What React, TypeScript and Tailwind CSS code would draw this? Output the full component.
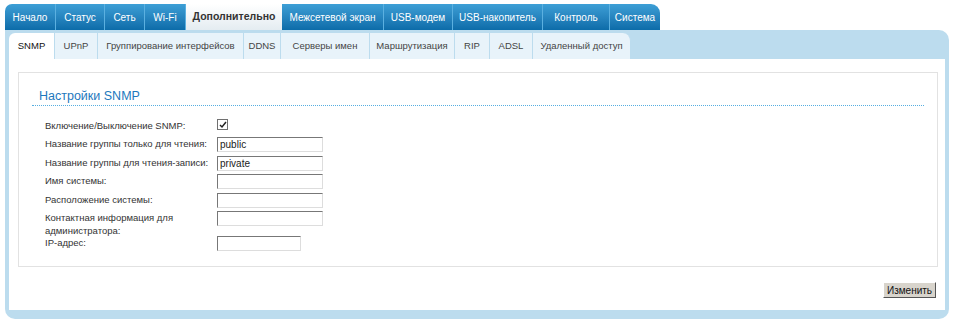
import React from "react";

const top = [
  { t: "Начало", w: 51 },
  { t: "Статус", w: 49 },
  { t: "Сеть", w: 40 },
  { t: "Wi-Fi", w: 41 },
  { t: "Дополнительно", w: 96, sel: true },
  { t: "Межсетевой экран", w: 102 },
  { t: "USB-модем", w: 69 },
  { t: "USB-накопитель", w: 90 },
  { t: "Контроль", w: 67 },
  { t: "Система", w: 50 },
];

const sub = [
  { t: "SNMP", w: 46, sel: true },
  { t: "UPnP", w: 43 },
  { t: "Группирование интерфейсов", w: 146 },
  { t: "DDNS", w: 37 },
  { t: "Серверы имен", w: 89 },
  { t: "Маршрутизация", w: 85 },
  { t: "RIP", w: 35 },
  { t: "ADSL", w: 43 },
  { t: "Удаленный доступ", w: 98 },
];

const rows: { label: React.ReactNode; kind: "cb" | "in" | "ip"; value?: string; h: string }[] = [
  { label: "Включение/Выключение SNMP:", kind: "cb", h: "h-[18px]" },
  { label: "Название группы только для чтения:", kind: "in", value: "public", h: "h-[19px]" },
  { label: "Название группы для чтения-записи:", kind: "in", value: "private", h: "h-[18px]" },
  { label: "Имя системы:", kind: "in", h: "h-[19px]" },
  { label: "Расположение системы:", kind: "in", h: "h-[18px]" },
  { label: <>Контактная информация для<br />администратора:</>, kind: "in", h: "h-[25px]" },
  { label: "IP-адрес:", kind: "ip", h: "h-[18px]" },
];

export default function App() {
  return (
    <div className="w-[954px] h-[325px] bg-white pt-[4px] pl-[5px] pr-[5px] text-[10px] text-[#222]" style={{ fontFamily: '"Liberation Sans", Arial, sans-serif' }}>
      {/* top tabs */}
      <div className="flex h-[26px]">
        {top.map((x, i) => (
          <div
            key={x.t}
            style={{ width: x.w }}
            className={
              "flex items-center justify-center shrink-0 whitespace-nowrap " +
              (x.sel
                ? "bg-gradient-to-b from-[#ffffff] to-[#e4ecf1] text-[#333] font-bold text-[10.5px]"
                : "bg-gradient-to-b from-[#3d9fd6] to-[#0c6ca9] text-white border-r border-[#5bb0e0] text-[10px]") +
              (i === 0 ? " rounded-tl-[7px]" : "") +
              (i === top.length - 1 ? " rounded-tr-[9px] border-r-0" : "")
            }
          >
            {x.t}
          </div>
        ))}
      </div>
      {/* panel */}
      <div className="bg-[#bcdcee] rounded-tr-[10px] rounded-b-[10px] px-[4px] pb-[9px] pt-[3px]">
        <div className="flex h-[26px] bg-[#bcdcee]">
          {sub.map((x, i) => (
            <div
              key={x.t}
              style={{ width: x.w }}
              className={
                "flex items-center justify-center shrink-0 whitespace-nowrap text-[9.5px] border-r border-[#bcdcee] " +
                (x.sel ? "bg-white text-[#111]" : "bg-[#e8f3fa] text-[#444]") +
                (i === 0 ? " rounded-tl-[6px]" : "") +
                (i === sub.length - 1 ? " rounded-tr-[8px]" : "")
              }
            >
              {x.t}
            </div>
          ))}
        </div>
        <div className="bg-white pt-[13px] pl-[9px] pr-[7px] pb-[12px]">
          <div className="border border-[#e2e2e2] h-[195px] pt-[16px] pl-[13px] pr-[13px]">
            <div className="text-[12.5px] text-[#1d78bd] pl-[7px] leading-[15px]">Настройки SNMP</div>
            <div className="border-b border-dotted border-[#56aee0] mt-[1px] mb-[12px]" />
            <div className="pl-[13px]">
              {rows.map((r, i) => (
                <div key={i} className={"flex " + r.h}>
                  <div className="w-[172px] shrink-0 leading-[13px] text-[9.5px] text-[#333] whitespace-nowrap pt-[1px]">{r.label}</div>
                  {r.kind === "cb" ? (
                    <div className="w-[11px] h-[11px] border border-[#707070] bg-white flex items-center justify-center mt-[1px]">
                      <svg width="8" height="8" viewBox="0 0 8 8">
                        <path d="M1 4 L3 6 L7 1" stroke="#222" strokeWidth="1.5" fill="none" />
                      </svg>
                    </div>
                  ) : (
                    <div
                      className={
                        "h-[15px] border border-t-[#777] border-l-[#777] border-r-[#ddd] border-b-[#ddd] bg-white text-[10px] leading-[13px] pl-[2px] mt-[1px] " +
                        (r.kind === "ip" ? "w-[84px]" : "w-[106px]")
                      }
                    >
                      {r.value}
                    </div>
                  )}
                </div>
              ))}
            </div>
          </div>
          <div className="flex justify-end mt-[15px] pr-[2px]">
            <div className="h-[16px] w-[53px] bg-[#d8d4cc] border border-t-white border-l-white border-r-[#555] border-b-[#555] flex items-center justify-center text-[10px] text-[#111]">
              Изменить
            </div>
          </div>
        </div>
      </div>
    </div>
  );
}
